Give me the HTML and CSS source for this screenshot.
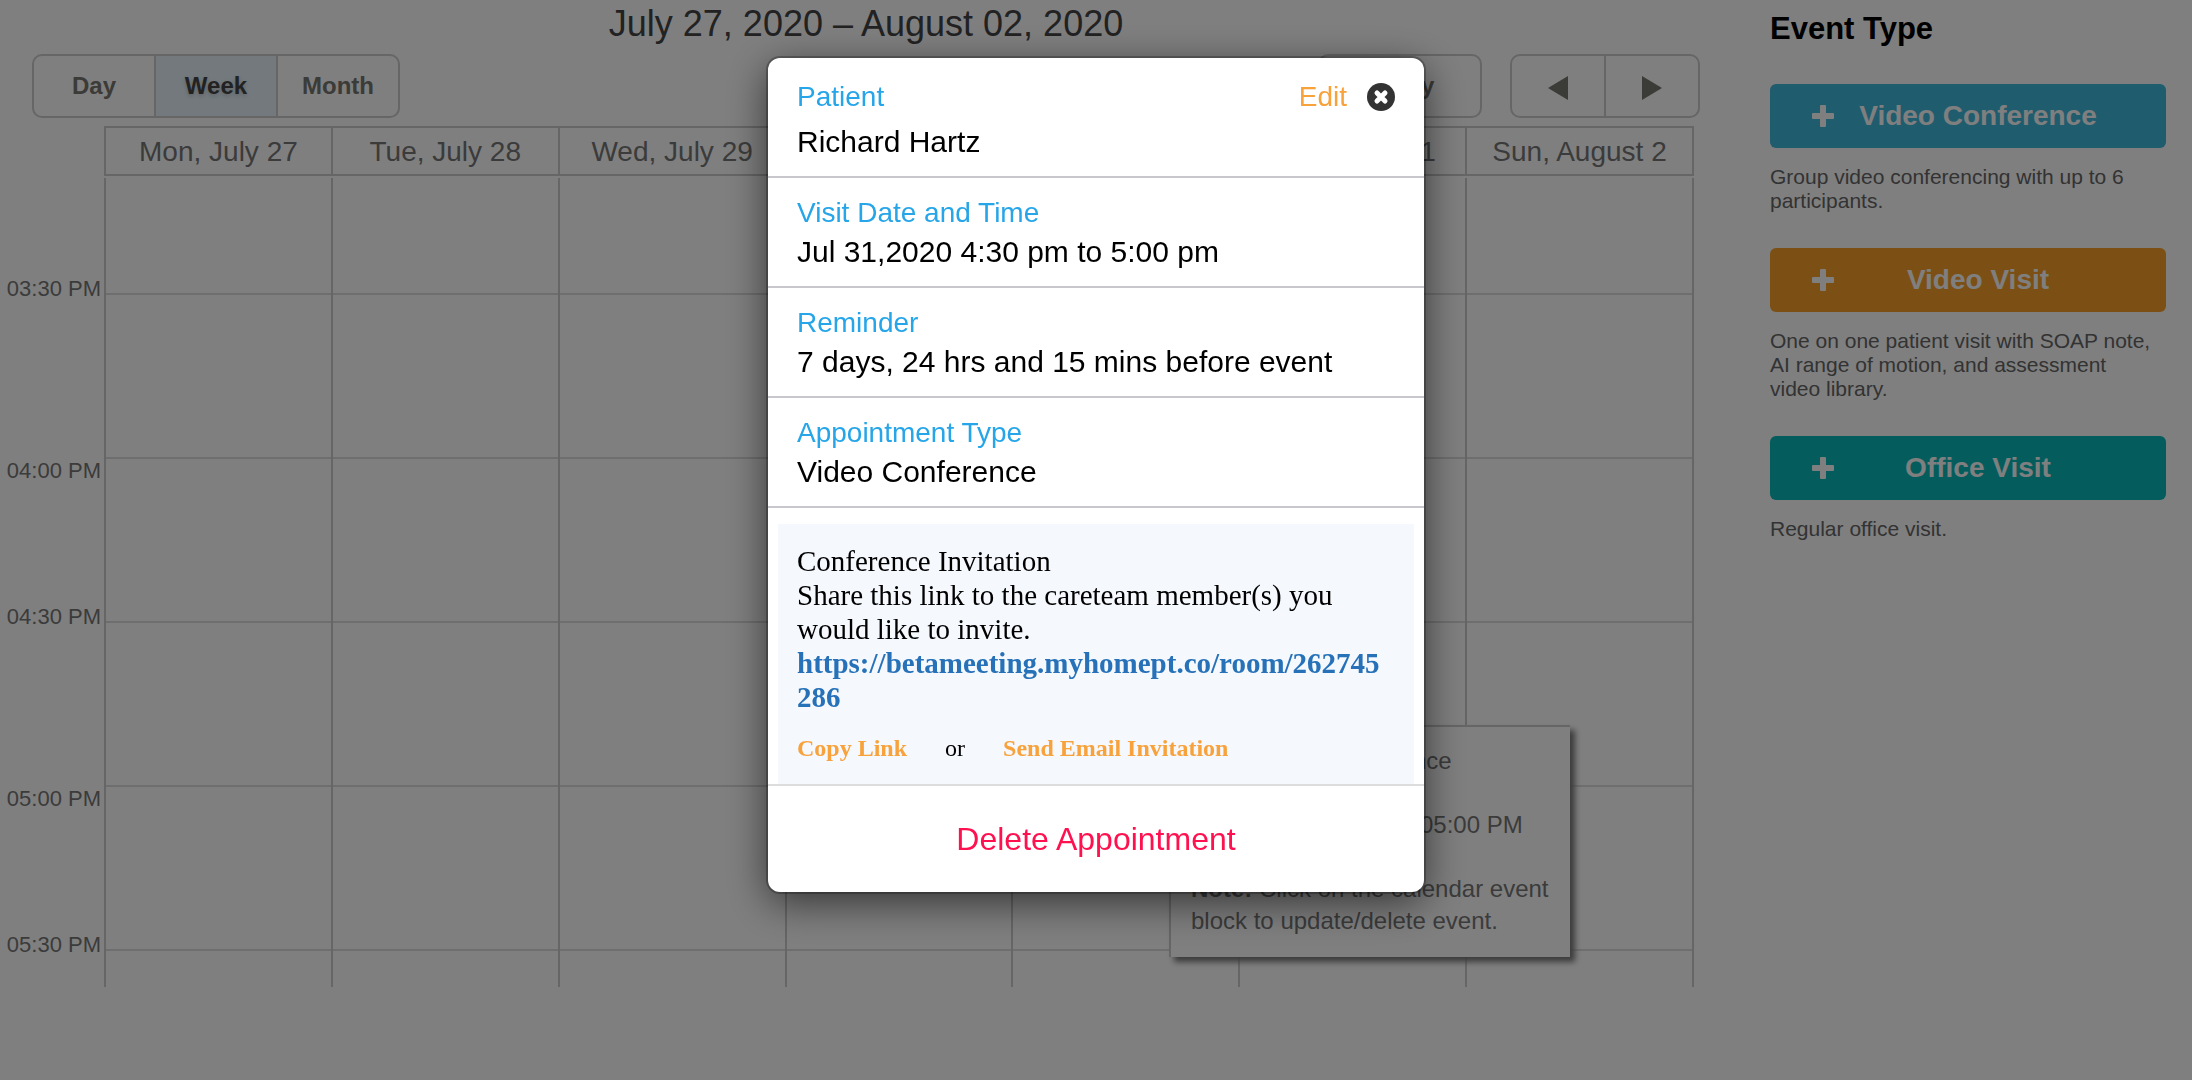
FILE: index.html
```html
<!DOCTYPE html>
<html lang="en">
<head>
    <meta charset="UTF-8">
    <meta name="viewport" content="width=device-width, initial-scale=1.0">
    <title>Appointments</title>
    <link rel="stylesheet" href="styles.css">
</head>
<body>
    <div class="page">
        <main class="calendar">
            <h1 class="calendar-title">July 27, 2020 – August 02, 2020</h1>
            <div class="toolbar">
                <div class="button-group views">
                    <button type="button">Day</button>
                    <button type="button" class="active">Week</button>
                    <button type="button">Month</button>
                </div>
                <div class="toolbar-right">
                    <div class="button-group today">
                        <button type="button">Today</button>
                    </div>
                    <div class="button-group arrows">
                        <button type="button" aria-label="Previous week">
                            <svg width="20" height="24" viewBox="0 0 20 24"><path d="M20 0v24L0 12z"/></svg>
                        </button>
                        <button type="button" aria-label="Next week">
                            <svg width="20" height="24" viewBox="0 0 20 24"><path d="M0 0v24l20-12z"/></svg>
                        </button>
                    </div>
                </div>
            </div>

            <div class="schedule">
                <div class="times">
                    <span class="time">03:30 PM</span>
                    <span class="time hour">04:00 PM</span>
                    <span class="time">04:30 PM</span>
                    <span class="time hour">05:00 PM</span>
                    <span class="time">05:30 PM</span>
                </div>
                <div class="grid">
                    <table class="days">
                        <tr>
                            <th>Mon, July 27</th>
                            <th>Tue, July 28</th>
                            <th>Wed, July 29</th>
                            <th>Thu, July 30</th>
                            <th>Fri, July 31</th>
                            <th>Sat, August 1</th>
                            <th>Sun, August 2</th>
                        </tr>
                    </table>
                    <table class="slots">
                        <tr class="first"><td></td><td></td><td></td><td></td><td></td><td></td><td></td></tr>
                        <tr><td></td><td></td><td></td><td></td><td></td><td></td><td></td></tr>
                        <tr><td></td><td></td><td></td><td></td><td></td><td></td><td></td></tr>
                        <tr><td></td><td></td><td></td><td></td><td></td><td></td><td></td></tr>
                        <tr><td></td><td></td><td></td><td></td><td></td><td></td><td></td></tr>
                        <tr class="last"><td></td><td></td><td></td><td></td><td></td><td></td><td></td></tr>
                    </table>
                    <div class="tooltip">
                        <p><b>Type:</b> Video Conference</p>
                        <p><b>Timing:</b> 04:30 PM to 05:00 PM</p>
                        <p><b>Note:</b> Click on the calendar event block to update/delete event.</p>
                    </div>
                </div>
            </div>
        </main>

        <aside class="event-types">
            <h2>Event Type</h2>
            <button type="button" class="event-button conference">
                <svg width="22" height="22" viewBox="0 0 22 22"><path d="M9 0h4q1 0 1 1v7h7q1 0 1 1v4q0 1-1 1h-7v7q0 1-1 1H9q-1 0-1-1v-7H1q-1 0-1-1V9q0-1 1-1h7V1q0-1 1-1z"/></svg>
                <span>Video Conference</span>
            </button>
            <p>Group video conferencing with up to 6 participants.</p>
            <button type="button" class="event-button visit">
                <svg width="22" height="22" viewBox="0 0 22 22"><path d="M9 0h4q1 0 1 1v7h7q1 0 1 1v4q0 1-1 1h-7v7q0 1-1 1H9q-1 0-1-1v-7H1q-1 0-1-1V9q0-1 1-1h7V1q0-1 1-1z"/></svg>
                <span>Video Visit</span>
            </button>
            <p>One on one patient visit with SOAP note, AI range of motion, and assessment video library.</p>
            <button type="button" class="event-button office">
                <svg width="22" height="22" viewBox="0 0 22 22"><path d="M9 0h4q1 0 1 1v7h7q1 0 1 1v4q0 1-1 1h-7v7q0 1-1 1H9q-1 0-1-1v-7H1q-1 0-1-1V9q0-1 1-1h7V1q0-1 1-1z"/></svg>
                <span>Office Visit</span>
            </button>
            <p>Regular office visit.</p>
        </aside>
    </div>

    <div class="overlay">
        <div class="modal" role="dialog" aria-label="Appointment">
            <section class="field patient">
                <div class="field-top">
                    <h3>Patient</h3>
                    <div class="actions">
                        <a href="#">Edit</a>
                        <button type="button" class="close" aria-label="Close">
                            <svg width="28" height="28" viewBox="0 0 28 28">
                                <circle cx="14" cy="14" r="14" fill="#333"/>
                                <path d="M10 10l8 8M18 10l-8 8" stroke="#fff" stroke-width="5" stroke-linecap="round"/>
                            </svg>
                        </button>
                    </div>
                </div>
                <p>Richard Hartz</p>
            </section>
            <section class="field">
                <h3>Visit Date and Time</h3>
                <p>Jul 31,2020 4:30 pm to 5:00 pm</p>
            </section>
            <section class="field">
                <h3>Reminder</h3>
                <p>7 days, 24 hrs and 15 mins before event</p>
            </section>
            <section class="field">
                <h3>Appointment Type</h3>
                <p>Video Conference</p>
            </section>
            <section class="invitation">
                <p>Conference Invitation</p>
                <p>Share this link to the careteam member(s) you would like to invite.</p>
                <a href="#" class="room">https://betameeting.myhomept.co/room/262745286</a>
                <div class="share">
                    <a href="#">Copy Link</a>
                    <span>or</span>
                    <a href="#">Send Email Invitation</a>
                </div>
            </section>
            <button type="button" class="delete">Delete Appointment</button>
        </div>
    </div>
</body>
</html>
```
FILE: styles.css
```css
* {
    box-sizing: border-box;
}

body {
    margin: 0;
    background-color: #fff;
    font-family: "Liberation Sans", Arial, sans-serif;
    color: #777;
}

h1, h2, h3, p {
    margin: 0;
    font-weight: normal;
}

button {
    font-family: inherit;
    border: none;
    padding: 0;
    background: none;
    cursor: pointer;
}

a {
    text-decoration: none;
}

table {
    width: 100%;
    border-collapse: collapse;
    table-layout: fixed;
}

.page {
    display: flex;
    height: 100vh;
    overflow: hidden;
}

/* Calendar */
.calendar {
    flex: 1;
}

.calendar-title {
    padding-left: 32px;
    font-size: 36px;
    line-height: 48px;
    margin-bottom: 6px;
    text-align: center;
    color: #444;
}

.toolbar {
    display: flex;
    justify-content: space-between;
    padding-left: 32px;
    margin-bottom: 8px;
}

.toolbar-right {
    display: flex;
    gap: 28px;
}

.button-group {
    display: flex;
    height: 64px;
    border: 2px solid #ccc;
    border-radius: 10px;
    overflow: hidden;
}

.button-group button {
    flex: 1;
    font-size: 24px;
    font-weight: bold;
    color: #777671;
}

.button-group button + button {
    border-left: 2px solid #ccc;
}

.button-group .active {
    background-color: #e6f3f9;
    color: #444;
    text-shadow: 0 2px 4px rgba(0, 0, 0, 0.2);
}

.button-group svg {
    fill: #777671;
    vertical-align: middle;
}

.views {
    width: 368px;
}

.today {
    width: 164px;
}

.arrows {
    width: 190px;
}

.schedule {
    display: flex;
    align-items: flex-start;
    padding-right: 6px;
}

.times {
    width: 104px;
    padding-top: 151px;
    text-align: right;
}

.time {
    display: block;
    height: 182px;
    padding-right: 3px;
    font-size: 22px;
    line-height: 24px;
}

.time.hour {
    height: 146px;
}

.time:last-child {
    height: 24px;
}

.grid {
    flex: 1;
    position: relative;
}

.days th {
    height: 48px;
    padding: 2px 0 0;
    border: 2px solid #ccc;
    font-size: 28px;
    font-weight: normal;
}

.slots {
    margin-top: 2px;
}

.slots td {
    height: 164px;
    padding: 0;
    border: 2px solid #ccc;
    border-top: 2px solid #ddd;
    border-bottom: 0;
}

.slots .first td {
    height: 116px;
    border-top: 0;
}

.slots .last td {
    height: 37px;
}

.tooltip {
    position: absolute;
    right: 124px;
    bottom: 30px;
    width: 401px;
    padding: 18px 18px 20px 20px;
    border-top: 2px solid #ccc;
    border-left: 2px solid #ccc;
    background-color: #fff;
    box-shadow: 5px 5px 6px #777;
    font-size: 24px;
    line-height: 32px;
}

.tooltip p + p {
    margin-top: 32px;
}

/* Event types */
.event-types {
    width: 492px;
    padding: 10px 26px 0 70px;
}

.event-types h2 {
    margin-bottom: 37px;
    font-size: 31px;
    line-height: 37px;
    font-weight: bold;
    color: #000;
}

.event-types p {
    margin: 17px 0 35px;
    padding-right: 10px;
    font-size: 21px;
    line-height: 24px;
    color: #666;
}

.event-button {
    display: flex;
    align-items: center;
    width: 100%;
    height: 64px;
    padding: 0 44px 0 42px;
    border-radius: 6px;
    font-size: 28px;
    font-weight: bold;
    color: #fff;
}

.event-button span {
    flex: 1;
}

.event-button svg {
    fill: #fff;
}

.conference {
    background-color: #3eb8dc;
}

.visit {
    background-color: #f8a028;
}

.office {
    background-color: #08b8b8;
}

/* Appointment popup */
.overlay {
    position: fixed;
    inset: 0;
    display: flex;
    justify-content: center;
    align-items: flex-start;
    padding-top: 58px;
    background-color: rgba(0, 0, 0, 0.5);
}

.modal {
    width: 656px;
    border-radius: 12px;
    background-color: #fff;
    box-shadow: 0 0 0 2px rgba(0, 0, 0, 0.25), 0 10px 40px rgba(0, 0, 0, 0.6);
    color: #000;
}

.field {
    padding: 18px 29px 12px;
    border-bottom: 2px solid #c8c7cc;
    font-size: 30px;
    line-height: 44px;
}

.field h3 {
    font-size: 28px;
    line-height: 34px;
    color: #26a5e8;
}

.patient {
    padding-top: 22px;
}

.field-top {
    display: flex;
    justify-content: space-between;
    margin-bottom: 6px;
}

.actions {
    display: flex;
    align-items: center;
    gap: 20px;
    font-size: 28px;
    line-height: 34px;
}

.actions a,
.share a {
    color: #f8a23c;
}

.close {
    display: flex;
}

.invitation {
    margin: 16px 10px 0;
    padding: 20px 24px 20px 19px;
    background-color: #f5f8fd;
    font-family: "Liberation Serif", "Times New Roman", serif;
    font-size: 29px;
    line-height: 34px;
}

.room {
    font-weight: bold;
    color: #2671b8;
    word-break: break-all;
}

.share {
    display: flex;
    gap: 38px;
    margin-top: 18px;
    font-size: 24px;
    line-height: 32px;
}

.share a {
    font-weight: bold;
}

.delete {
    width: 100%;
    height: 108px;
    border-top: 2px solid #ddd;
    font-size: 32px;
    color: #ff1150;
}
```
